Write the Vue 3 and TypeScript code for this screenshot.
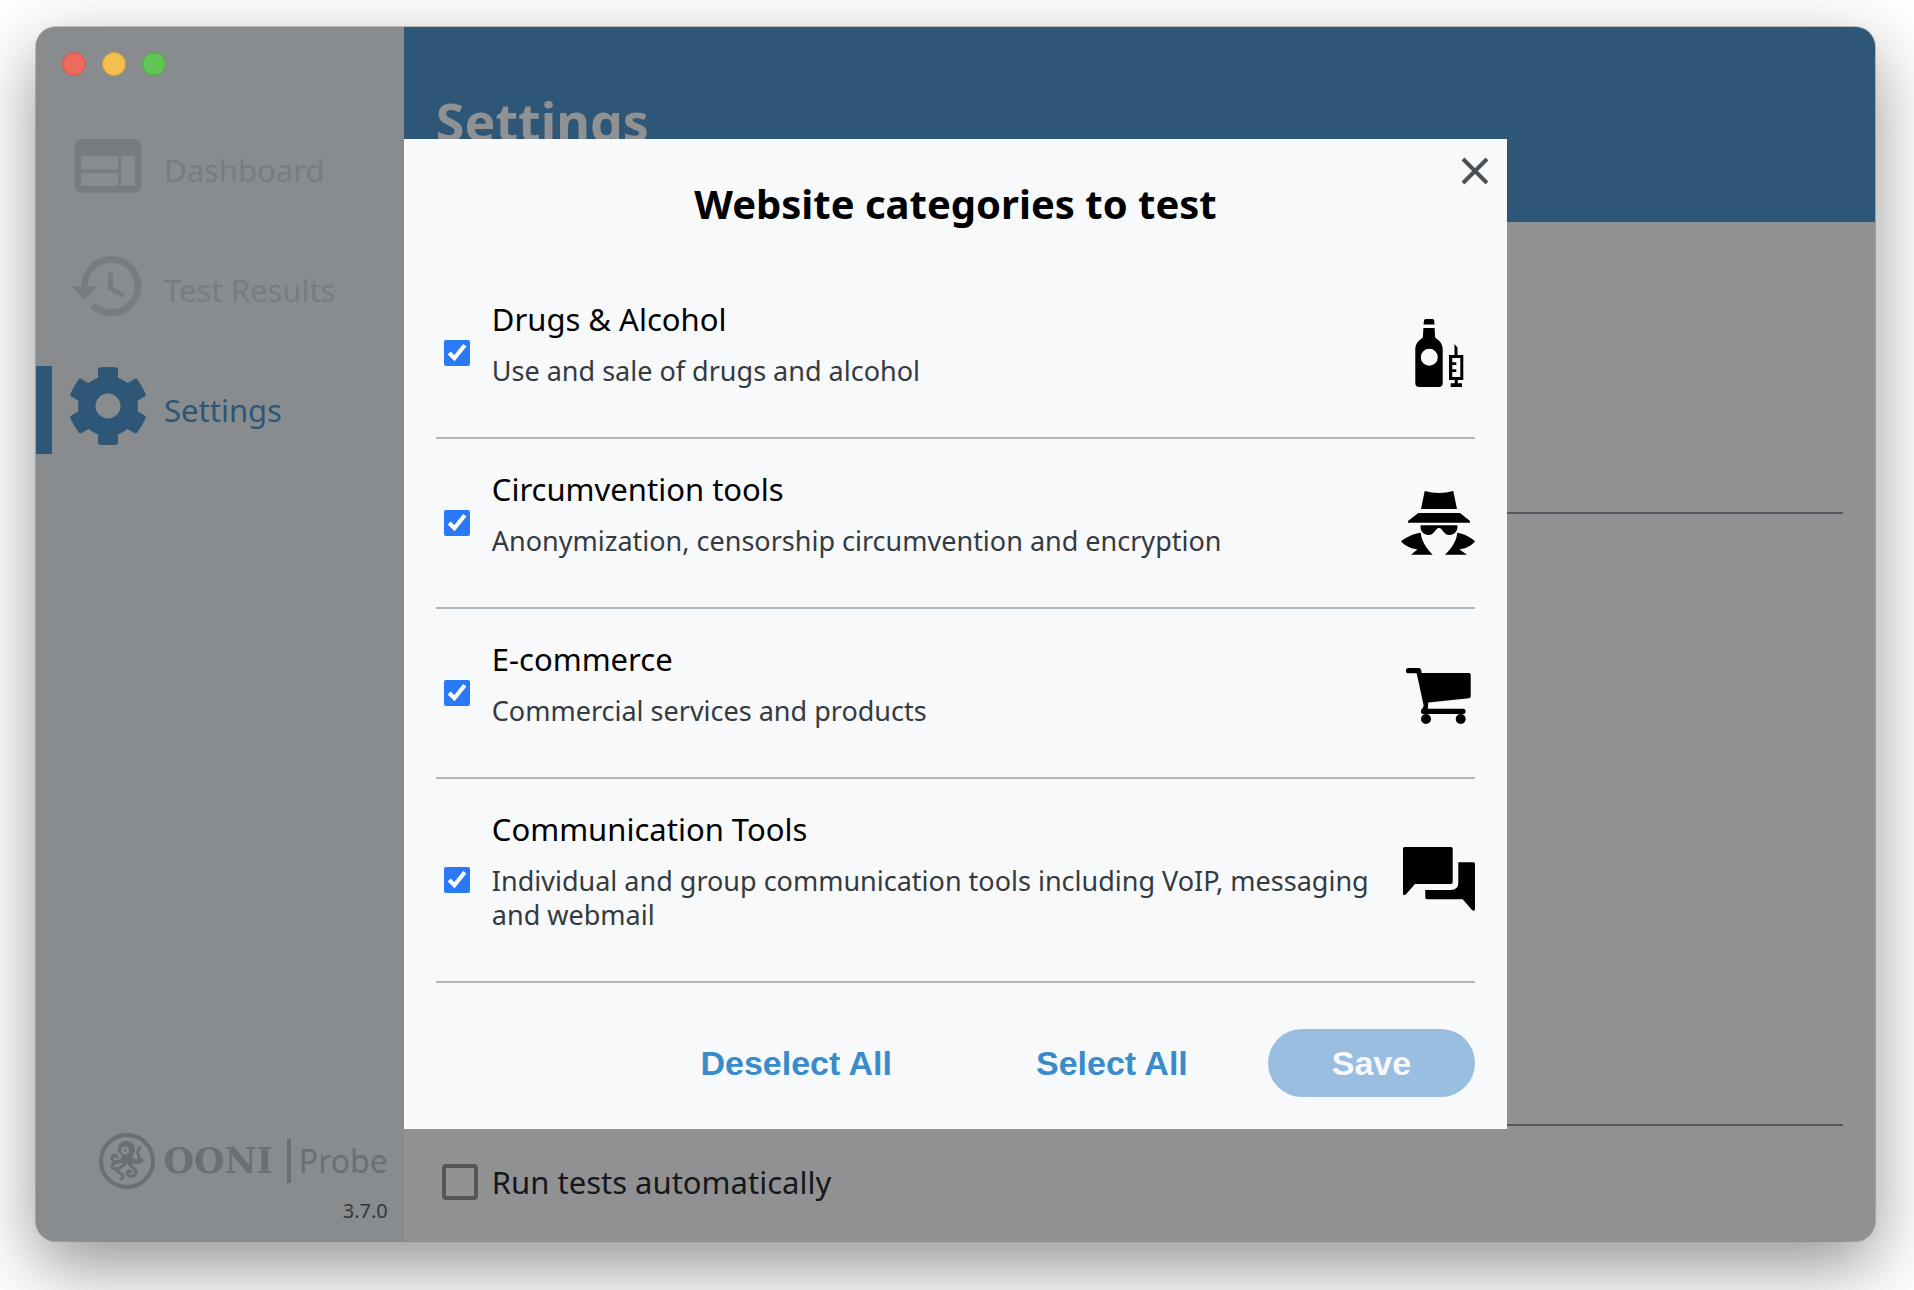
<script setup lang="ts">
import { computed, reactive, ref } from 'vue'

interface Category {
  code: string
  name: string
  description: string
  enabled: boolean
}

const categories = reactive<Category[]>([
  { code: 'ALDR', name: 'Drugs & Alcohol', description: 'Use and sale of drugs and alcohol', enabled: true },
  { code: 'ANON', name: 'Circumvention tools', description: 'Anonymization, censorship circumvention and encryption', enabled: true },
  { code: 'COMM', name: 'E-commerce', description: 'Commercial services and products', enabled: true },
  { code: 'COMT', name: 'Communication Tools', description: 'Individual and group communication tools including VoIP, messaging and webmail', enabled: true },
])

const dialogOpen = ref(true)
const autorun = ref(false)
const unchanged = computed(() => categories.every((c) => c.enabled))

function setAll(value: boolean) {
  categories.forEach((c) => { c.enabled = value })
}
</script>

<template>
  <div class="desktop">
    <div class="window">
      <aside class="sidebar">
        <div class="lights">
          <span class="light red"></span>
          <span class="light yellow"></span>
          <span class="light green"></span>
        </div>
        <nav class="nav">
          <a class="nav-item" href="#dashboard">
            <svg class="nav-icon" viewBox="0 0 80 80" aria-hidden="true">
              <path fill="currentColor" fill-rule="evenodd" d="M12 13h56a5 5 0 0 1 5 5v43.500a5 5 0 0 1-5 5H12a5 5 0 0 1-5-5V18a5 5 0 0 1 5-5zM13 30v13.500h37V30zM13 47v13h37V47zM53 30v30h14V30z" />
            </svg>
            <span>Dashboard</span>
          </a>
          <a class="nav-item" href="#results">
            <svg class="nav-icon" viewBox="0 0 24 24" aria-hidden="true">
              <path fill="currentColor" d="M13 3c-4.970 0-9 4.030-9 9H1l3.890 3.890.07.14L9 12H6c0-3.870 3.130-7 7-7s7 3.130 7 7-3.130 7-7 7c-1.930 0-3.680-.79-4.940-2.060l-1.420 1.420C8.270 19.990 10.510 21 13 21c4.970 0 9-4.030 9-9s-4.030-9-9-9zm-1 5v5l4.280 2.540.72-1.210-3.500-2.080V8H12z" />
            </svg>
            <span>Test Results</span>
          </a>
          <a class="nav-item active" href="#settings">
            <svg class="nav-icon" viewBox="0 0 80 80" aria-hidden="true">
              <circle cx="40" cy="40" r="21.250" fill="none" stroke="currentColor" stroke-width="17.500" />
              <path v-for="n in 6" :key="n" fill="currentColor" :transform="`rotate(${n * 60} 40 40)`" d="M30 14V3q0-1.500 2-1.700Q40 .6 48 1.300q2 .2 2 1.700v11z" />
            </svg>
            <span>Settings</span>
          </a>
        </nav>
        <div class="brand">
          <svg class="brand-mark" viewBox="0 0 56 56" aria-hidden="true">
            <g fill="none" stroke="currentColor" stroke-linecap="round">
              <circle cx="28" cy="28" r="26" stroke-width="4" />
              <path stroke-width="3" d="M24 25c-3 5-11 5-11 0 0-3 4-4 5-1M25 28c-5 1-11 1-12 5 0 3 4 4 5 2M32 25c4 4 9 4 8-1-1-3-3-6 1-9M32 28c5 3 10 2 11-1M26 30c0 4-7 4-8 7 0 3 6 3 6 6 0 2-1 3-2 3M30 30c1 5 7 5 7 9 0 5-8 6-9 1 0-2 2-3 4-1" />
            </g>
            <path fill="currentColor" fill-rule="evenodd" d="M27.500 8c5 0 8.500 3.500 8.500 8.500 0 3-2 5-2.500 7.500L34 31H23l.5-7C22 21 19 20 19 16.500 19 11.500 22.500 8 27.500 8zM26 13.500a4 4 0 1 0 0 8 4 4 0 0 0 0-8z" />
            <circle cx="26" cy="17.500" r="1.300" fill="currentColor" />
          </svg>
          <span class="brand-name">OONI</span>
          <span class="brand-rule"></span>
          <span class="brand-product">Probe</span>
        </div>
        <div class="version">3.7.0</div>
      </aside>

      <main class="main">
        <header class="page-header"><h1>Settings</h1></header>
        <div class="page-body">
          <section class="panel"></section>
          <section class="panel tall"></section>
          <label class="autorun">
            <input v-model="autorun" type="checkbox" />
            <span>Run tests automatically</span>
          </label>
        </div>
      </main>

      <div v-if="dialogOpen" class="overlay">
        <div class="dialog" role="dialog" aria-modal="true" aria-labelledby="dialog-title">
          <button class="close" type="button" aria-label="Close" @click="dialogOpen = false">
            <svg viewBox="0 0 28 28" aria-hidden="true">
              <path d="M2 2l24 24M26 2l-24 24" fill="none" stroke="currentColor" stroke-width="4" />
            </svg>
          </button>
          <h2 id="dialog-title">Website categories to test</h2>
          <ul class="list">
            <li v-for="c in categories" :key="c.code" class="row">
              <input :id="c.code" v-model="c.enabled" type="checkbox" />
              <label class="text" :for="c.code">
                <span class="name">{{ c.name }}</span>
                <span class="desc">{{ c.description }}</span>
              </label>
              <svg class="icon" viewBox="0 0 74 74" aria-hidden="true">
                <template v-if="c.code === 'ALDR'">
                  <path fill-rule="evenodd" d="M24.500 3h7q1.500 0 1.700 1.500L33.500 8.500h-11L23 4.500Q23.200 3 24.500 3zM22.400 12h11.200l.5 9.500c3 2.500 7.600 5 7.600 12V67a4 4 0 0 1-4 4H18.300a4 4 0 0 1-4-4V33.500c0-7 4.600-9.500 7.600-12zM28.300 32.700a8.500 8.500 0 1 0 0 17 8.500 8.500 0 0 0 0-17z" />
                  <path fill-rule="evenodd" d="M53.500 28l3 3.500V39h5.800v25h-5.600v3.300h4.300V71H49.700v-3.700h4V64H48V39h5.500zM51.300 42v4.300h4V49h-4v4.300h4V56h-4v5h8V42z" />
                </template>
                <template v-else-if="c.code === 'ANON'">
                  <path d="M23.700 5q14.300 4 28.600 0L56 23H20zM17.300 27H59l10 8v1.700H7V35z" />
                  <path d="M19.700 39.300h36.600C57.500 45 53 49 48.500 49c-6 0-7-7-10.500-7.300C34.500 42 33.500 49 27.500 49c-4.500 0-9-4-7.800-9.700z" />
                  <path d="M19.700 46.700C21 57 26 62.500 31.700 68.700H10l6.300-5.200C8 62 3.500 59.500 0 55.300c5-4 12-7.600 19.700-8.600zM56.300 46.700C55 57 50 62.500 44 68.700h22l-7.500-5.200C67 62 70.500 59.500 74 55.300c-4-4-11-7.600-17.700-8.600z" />
                </template>
                <template v-else-if="c.code === 'COMM'">
                  <path d="M7.600 12H18q2 0 2.300 2.500L20.700 17H68q1.700 0 1.700 1.700V40.500q0 1.500-1.700 1.700L27.300 46.500l-.5 6.200H62a2.650 2.650 0 0 1 0 5.300H22.600c-3 0-3.600-3.700-1-5.800l1.100-2.500L15.700 17.300H7.600a2.650 2.650 0 0 1 0-5.300z" />
                  <circle cx="25" cy="63" r="5" />
                  <circle cx="59.700" cy="63" r="5" />
                </template>
                <template v-else>
                  <path d="M3.500 4H50q1.700 0 1.700 1.700v33.600q0 1.700-1.700 1.700H14L4.800 51.500Q2 53.300 2 50.500V5.500Q2 4 3.500 4z" />
                  <path d="M57.300 19.300H72.500q1.500 0 1.500 1.500V66q0 2.800-3 1L61.700 56.300H26q-1.700 0-1.700-1.700V47h25.400q7.600 0 7.600-7.300z" />
                </template>
              </svg>
            </li>
          </ul>
          <footer class="actions">
            <button class="btn link" type="button" @click="setAll(false)">Deselect All</button>
            <button class="btn link" type="button" @click="setAll(true)">Select All</button>
            <button class="btn save" type="button" :disabled="unchanged">Save</button>
          </footer>
        </div>
      </div>
    </div>
  </div>
</template>

<style>
body {
  background: #fff;
}
</style>

<style scoped>
* {
  box-sizing: border-box;
}

.desktop {
  display: flex;
  min-height: 100vh;
  padding: 27px 39px 49px 36px;
  overflow: hidden;
  font-family: 'Noto Sans', sans-serif;
  font-size: 31px;
  line-height: 40px;
  color: #000;
}

.window {
  position: relative;
  display: flex;
  flex: 1;
  border-radius: 20px;
  background: #909192;
  box-shadow: 0 0 0 1px rgba(0, 0, 0, 0.2), 0 25px 70px rgba(0, 0, 0, 0.43);
}

.sidebar {
  display: flex;
  flex-direction: column;
  width: 20%;
  padding-bottom: 14px;
  border-radius: 20px 0 0 20px;
  background: #888c8e;
}

.lights {
  display: flex;
  gap: 16px;
  padding: 25px 26px 50px;
}

.light {
  width: 24px;
  height: 24px;
  border: 1px solid;
  border-radius: 50%;
}

.red {
  background: #ed6a5e;
  border-color: #d5554a;
}

.yellow {
  background: #f5bf4f;
  border-color: #d9a13c;
}

.green {
  background: #61c554;
  border-color: #51a73e;
}

.nav {
  display: flex;
  flex-direction: column;
  gap: 32px;
}

.nav-item {
  display: flex;
  gap: 16px;
  height: 88px;
  padding-left: 16px;
  border-left: 16px solid transparent;
  line-height: 88px;
  color: #787c80;
  text-decoration: none;
}

.nav-item.active {
  border-color: #2e5676;
  color: #2e5676;
}

.nav-icon {
  flex: none;
  width: 80px;
  height: 80px;
}

.brand {
  display: flex;
  align-items: center;
  justify-content: flex-end;
  margin-top: auto;
  padding-right: 16px;
  color: #6a6f73;
}

.brand-mark {
  width: 56px;
  height: 56px;
}

.brand-name {
  margin-left: 8px;
  font-family: 'DejaVu Serif', serif;
  font-size: 35px;
  font-weight: 700;
}

.brand-rule {
  width: 4px;
  height: 44px;
  margin: 0 8px 0 14px;
  background: currentColor;
}

.brand-product {
  font-size: 32px;
}

.version {
  padding: 6px 16px 0 0;
  font-size: 20px;
  line-height: 32px;
  text-align: right;
  color: #34383c;
}

.main {
  display: flex;
  flex: 1;
  flex-direction: column;
}

.page-header {
  height: 195px;
  padding: 64px 32px 0;
  border-radius: 0 20px 0 0;
  background: #2e5676;
}

h1 {
  margin: 0;
  font-size: 52px;
  line-height: 60px;
  color: #909192;
}

.page-body {
  padding: 0 32px;
}

.panel {
  height: 292px;
  border-bottom: 2px solid #535a61;
}

.panel.tall {
  height: 612px;
}

.autorun {
  display: flex;
  align-items: center;
  gap: 14px;
  padding: 36px 6px 0;
  color: #15171a;
}

.autorun input {
  appearance: none;
  width: 36px;
  height: 36px;
  margin: 0;
  border: 4px solid #555658;
  border-radius: 4px;
}

.autorun input:checked {
  background: #2e5676;
}

.overlay {
  position: absolute;
  inset: 0;
  display: flex;
  align-items: center;
  justify-content: center;
}

.dialog {
  position: relative;
  width: 60%;
  padding: 40px 32px 32px;
  background: #f8f9fb;
}

.close {
  position: absolute;
  top: 18px;
  right: 18px;
  width: 28px;
  height: 28px;
  padding: 0;
  border: 0;
  background: none;
  color: #4c5158;
}

.close svg {
  display: block;
}

h2 {
  margin: 0 0 40px;
  font-size: 40px;
  line-height: 50px;
  text-align: center;
}

.list {
  margin: 0;
  padding: 0;
  list-style: none;
}

.row {
  display: flex;
  align-items: center;
  border-bottom: 2px solid #adb5bd;
}

.row input {
  flex: none;
  width: 26px;
  height: 26px;
  margin: 0 22px 0 8px;
  accent-color: #2a7af8;
}

.text {
  display: flex;
  flex: 1;
  flex-direction: column;
  gap: 15px;
  padding: 30px 0 49px;
}

.desc {
  font-size: 27px;
  line-height: 34px;
  color: #343a40;
}

.icon {
  flex: none;
  width: 74px;
  height: 74px;
  margin-left: 24px;
}

.actions {
  display: flex;
  justify-content: flex-end;
  gap: 16px;
  padding-top: 46px;
}

.btn {
  height: 68px;
  padding: 0 64px;
  border: 0;
  border-radius: 34px;
  font-family: 'Liberation Sans', Arial, sans-serif;
  font-size: 34px;
  font-weight: 700;
}

.link {
  background: none;
  color: #3a8bcb;
}

.save {
  background: #9abee0;
  color: #f8f9fb;
}
</style>
